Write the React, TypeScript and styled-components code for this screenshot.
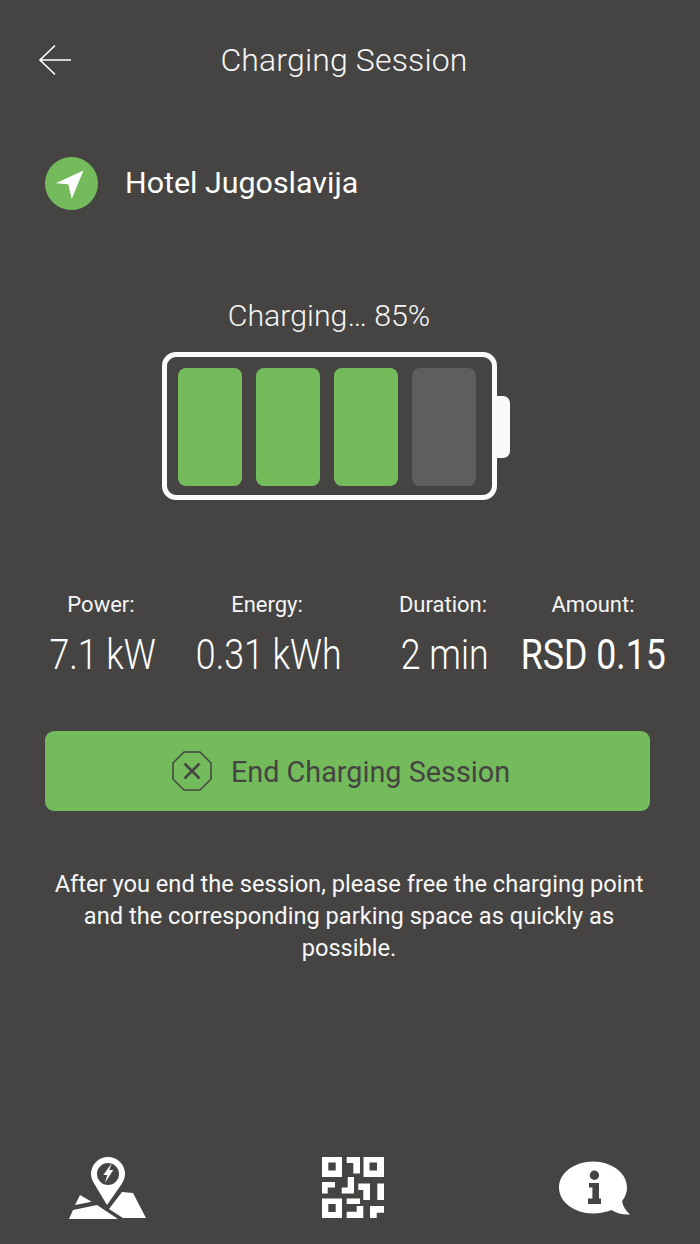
import React from "react";
import styled, { createGlobalStyle } from "styled-components";

const Global = createGlobalStyle`
  html, body { margin: 0; padding: 0; background: #454443; }
  body { font-family: Roboto, "Liberation Sans", sans-serif; }
`;

const Page = styled.div`
  width: 700px;
  height: 1244px;
  background: #454443;
  color: #fff;
  display: flex;
  flex-direction: column;
  overflow: hidden;
`;

const Header = styled.header`
  display: grid;
  grid-template-columns: 50px 1fr 100px;
  align-items: center;
  height: 40px;
  margin-top: 40px;
  padding-left: 38px;
`;

const Back = styled.svg`
  display: block;
  width: 34px;
  height: 32px;
`;

const Title = styled.h1`
  margin: 0;
  font-size: 32px;
  font-weight: 300;
  text-align: center;
  letter-spacing: 0.15px;
  line-height: 40px;
  color: #f7f7f7;
`;

const Location = styled.div`
  display: flex;
  align-items: center;
  gap: 27px;
  margin: 77px 0 0 45px;
  height: 53px;
`;

const Pin = styled.div`
  width: 53px;
  height: 53px;
  border-radius: 50%;
  background: #73bb5b;
  display: flex;
  align-items: center;
  justify-content: center;
`;

const Place = styled.div`
  font-size: 30.4px;
  font-weight: 400;
  line-height: 40px;
  margin-top: -2px;
`;

const Status = styled.div`
  margin: 87px 0 0;
  width: 658px;
  text-align: center;
  font-size: 30.3px;
  font-weight: 300;
  line-height: 38px;
  color: #f7f7f7;
`;

const BatteryRow = styled.div`
  display: flex;
  align-items: center;
  margin: 17px 0 0 162px;
`;

const BatteryBody = styled.div`
  box-sizing: border-box;
  width: 335px;
  height: 148px;
  border: 5px solid #fafafa;
  border-radius: 14px;
  padding: 11px;
  display: flex;
  gap: 14px;
`;

const Cell = styled.div<{ $on: boolean }>`
  width: 64px;
  height: 118px;
  border-radius: 8px;
  background: ${(p) => (p.$on ? "#73bb5b" : "#5f5e5d")};
`;

const Nub = styled.div`
  width: 13px;
  height: 62px;
  margin-top: 2px;
  background: #fafafa;
  border-radius: 0 7px 7px 0;
`;

const Stats = styled.div`
  display: grid;
  grid-template-columns: 168px 164px 188px 108px;
  margin: 93px 0 0 19px;
`;

const Stat = styled.div`
  display: flex;
  flex-direction: column;
  align-items: center;
`;

const Label = styled.div<{ $flush?: boolean }>`
  font-size: 22px;
  line-height: 24px;
  color: #f5f5f5;
  margin-left: ${(p) => (p.$flush ? 0 : -4)}px;
  white-space: nowrap;
`;

const Value = styled.div<{ $bold?: boolean }>`
  margin-top: 15px;
  font-size: 42px;
  line-height: 46px;
  font-weight: ${(p) => (p.$bold ? 400 : 300)};
  white-space: nowrap;
  transform: scaleX(0.85);
`;

const EndButton = styled.button`
  display: flex;
  align-items: center;
  justify-content: center;
  gap: 19px;
  box-sizing: border-box;
  width: 605px;
  height: 80px;
  margin: 53px 0 0 45px;
  padding: 0 13px 0 0;
  border: 0;
  border-radius: 9px;
  background: #73bb5b;
  color: #454443;
  font-family: Roboto, sans-serif;
  font-size: 28.8px;
  font-weight: 400;
`;

const ButtonLabel = styled.span`
  position: relative;
  top: 1px;
`;

const Note = styled.p`
  margin: 57px 0 0 45px;
  width: 608px;
  text-align: center;
  font-size: 23.65px;
  line-height: 32px;
  color: #f7f7f7;
`;

const Nav = styled.nav`
  margin-top: auto;
  height: 88px;
  display: grid;
  grid-template-columns: 215px 278px 204px;
  justify-items: center;
  align-items: start;
`;

const NavIcon = styled.svg<{ $drop?: number }>`
  display: block;
  fill: #fff;
  margin-top: ${(p) => p.$drop ?? 0}px;
`;

export default function App() {
  return (
    <Page>
      <Global />
      <Header>
        <Back viewBox="0 0 34 32" fill="none" stroke="#fff" strokeWidth="1.6">
          <path d="M33 16H2M17 1.500 2 16 17 30.500" />
        </Back>
        <Title>Charging Session</Title>
      </Header>
      <Location>
        <Pin>
          <svg width="53" height="53" viewBox="0 0 53 53" fill="#fff">
            <path d="M38.500 13.500 26.700 42 23.300 27.300 10.700 26.300z" />
          </svg>
        </Pin>
        <Place>Hotel Jugoslavija</Place>
      </Location>
      <Status>Charging… 85%</Status>
      <BatteryRow>
        <BatteryBody>
          <Cell $on />
          <Cell $on />
          <Cell $on />
          <Cell $on={false} />
        </BatteryBody>
        <Nub />
      </BatteryRow>
      <Stats>
        <Stat><Label>Power:</Label><Value>7.1 kW</Value></Stat>
        <Stat><Label>Energy:</Label><Value>0.31 kWh</Value></Stat>
        <Stat><Label>Duration:</Label><Value>2 min</Value></Stat>
        <Stat><Label $flush>Amount:</Label><Value $bold>RSD 0.15</Value></Stat>
      </Stats>
      <EndButton>
        <svg width="40" height="40" viewBox="0 0 40 40" fill="none" stroke="#454443">
          <path strokeWidth="1.5" d="M12 1h16l11 11v16L28 39H12L1 28V12z" />
          <path strokeWidth="2.500" d="m12.500 12.500 15 15M27.500 12.500l-15 15" />
        </svg>
        <ButtonLabel>End Charging Session</ButtonLabel>
      </EndButton>
      <Note>
        After you end the session, please free the charging point and the corresponding parking space as quickly as possible.
      </Note>
      <Nav>
        <NavIcon width="78" height="64" viewBox="0 0 78 64">
          <path fillRule="evenodd" d="M39 1a17 17 0 0 1 17 17c0 4-2 8-4 11L38 49 26 29c-2-3-4-7-4-11A17 17 0 0 1 39 1zm0 6a11 11 0 1 0 0 22 11 11 0 0 0 0-22z" />
          <path d="M42.700 7.300 34.300 19h4L36 26.700 44.300 14h-4z" />
          <path d="M11 39l11.700 6.700L6 49zM4 54l24-5 21 14H0zM53 36l11 1 13 25H54L40 53z" />
        </NavIcon>
        <NavIcon width="64" height="64" viewBox="0 0 64 64">
          <path fillRule="evenodd" d="M0 1h20v20H0zm6.300 5.500v8h7.400v-8zM41.500 1H62v20H41.500zm6 5.500v8H55v-8zM0 42.500h20V62H0zm6.300 5.500v8h7.400v-8z" />
          <path d="M24.700 1H38v16.500h-6.700V7h-6.600zM0 26h13v5.500H5.700V37.500H0zM25.700 21H32v16.500H19.700v-6h6zM36.300 27.500H48V44h-6.700V34h-5zM55.300 27.500H62V44h-6.700zM24.700 42.500H38V48H24.700zM34.700 50h6.600v12H24.700v-6.300h10zM48 50h14v6.700h-7.300V62H48z" />
        </NavIcon>
        <NavIcon $drop={5} width="72" height="56" viewBox="0 0 72 56">
          <path fillRule="evenodd" d="M34 .5c18.800 0 34 11.600 34 26 0 5-1.800 9.700-5 13.700 1 5 3.500 9.500 8 13.300-7 .5-13-1-18.500-4.500-5.500 2.300-12 3.500-18.500 3.500C15.200 52.500 0 40.900 0 26.500S15.200.5 34 .5zm1.400 9a4.700 4.700 0 1 0 0 9.400 4.700 4.700 0 0 0 0-9.400zM30 22v4.500h3.400v11H29V43h13v-5.500h-2V22z" />
        </NavIcon>
      </Nav>
    </Page>
  );
}
